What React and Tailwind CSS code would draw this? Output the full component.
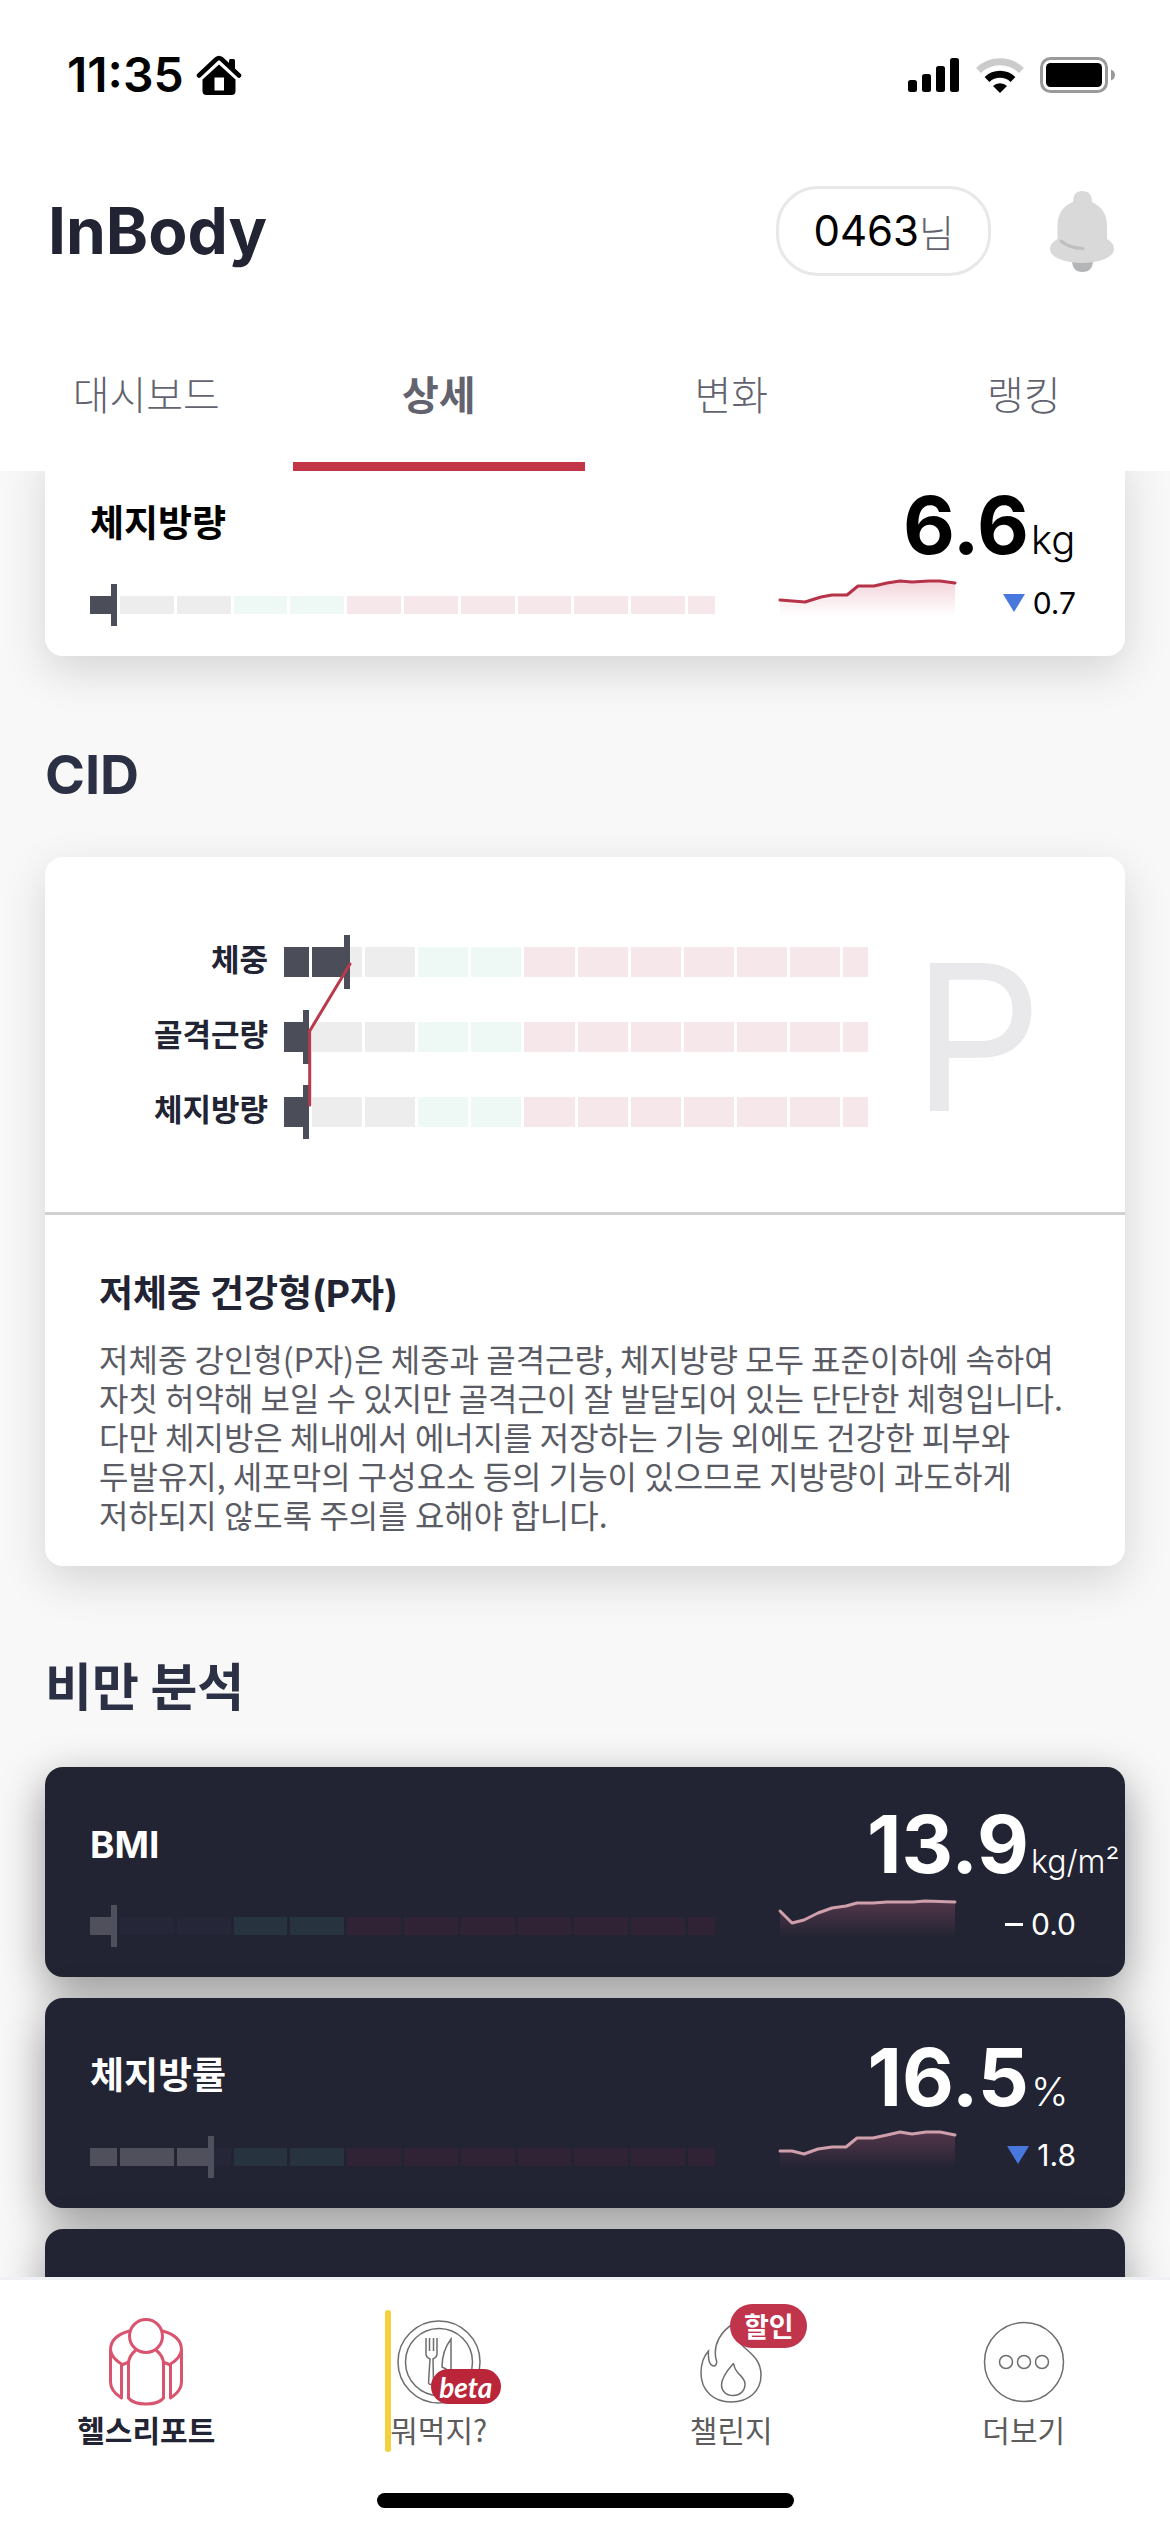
import React, { useId } from 'react';
import { clsx } from 'clsx';

const tabs = [
    { id: 'dashboard', label: '대시보드' },
    { id: 'detail', label: '상세' },
    { id: 'change', label: '변화' },
    { id: 'ranking', label: '랭킹' },
];

const fatMassTrend = [[0, 25], [25, 27], [41, 22], [52, 20], [67, 20], [78, 11], [94, 11], [107, 8], [120, 6], [132, 7], [149, 6], [160, 6], [175, 8]];
const bmiTrend = [[0, 15], [12, 27], [24, 24], [38, 17], [52, 12], [66, 10], [77, 7], [93, 7], [107, 6], [133, 6], [145, 5], [175, 6]];
const fatRateTrend = [[0, 24], [12, 24], [24, 27], [38, 22], [52, 20], [66, 20], [77, 11], [93, 11], [107, 8], [120, 5], [132, 7], [146, 5], [160, 5], [175, 8]];

const cidRows = [
    { label: '체중', value: 2.52 },
    { label: '골격근량', value: 1 },
    { label: '체지방량', value: 1 },
];

// size is counted in half steps: the first and last segment are half as wide
const segments = [
    { tone: 'under', size: 1 },
    { tone: 'under', size: 2 },
    { tone: 'under', size: 2 },
    { tone: 'normal', size: 2 },
    { tone: 'normal', size: 2 },
    { tone: 'over', size: 2 },
    { tone: 'over', size: 2 },
    { tone: 'over', size: 2 },
    { tone: 'over', size: 2 },
    { tone: 'over', size: 2 },
    { tone: 'over', size: 2 },
    { tone: 'over', size: 1 },
];

const lightTones = { under: 'bg-[#ededed]', normal: 'bg-[#eef8f5]', over: 'bg-[#f6e7ea]', fill: 'bg-[#4b4d58]' };
const darkTones = { under: 'bg-[#252739]', normal: 'bg-[#27343f]', over: 'bg-[#302336]', fill: 'bg-[#4f505b]' };

const RangeBar = ({ value, dark = false, thick = false }) => {
    const tones = dark ? darkTones : lightTones;
    let start = 0;
    return (
        <div className={clsx('flex w-full gap-[3px]', thick ? 'h-[30px]' : 'h-[18px]')}>
            {segments.map((segment, index) => {
                const filled = Math.min(Math.max((value - start) / segment.size, 0), 1);
                start += segment.size;
                const isLast = filled > 0 && value <= start;
                return (
                    <div key={index} className={clsx('basis-0', segment.size === 1 ? 'grow' : 'grow-2', tones[segment.tone])}>
                        {filled > 0 && (
                            <div className={clsx('relative h-full', tones.fill)} style={{ width: `${filled * 100}%` }}>
                                {isLast && <span className={clsx('absolute -top-3 -bottom-3 right-0 w-[6px]', tones.fill)} />}
                            </div>
                        )}
                    </div>
                );
            })}
        </div>
    );
};

const Sparkline = ({ points, dark = false }) => {
    const gradientId = useId();
    const line = points.map((point) => point.join(',')).join(' ');
    const color = dark ? '#cf9fac' : '#b53248';
    return (
        <svg viewBox="0 0 176 60" className="h-[60px] w-[176px] shrink-0 overflow-visible" aria-hidden="true">
            <defs>
                <linearGradient id={gradientId} x1="0" y1="5" x2="0" y2="41" gradientUnits="userSpaceOnUse">
                    <stop offset="0" stopColor={dark ? '#54364a' : '#f3d3da'} />
                    <stop offset="1" stopColor={dark ? '#222433' : '#ffffff'} />
                </linearGradient>
            </defs>
            <polygon points={`0,41 ${line} 175,41`} fill={`url(#${gradientId})`} />
            <polyline points={line} fill="none" stroke={color} strokeWidth="3" strokeLinecap="round" strokeLinejoin="round" />
        </svg>
    );
};

const MetricCard = ({ title, value, unit, smallUnit = false, points, level, change, isDown = false, dark = false }) => (
    <article
        className={clsx(
            'h-[210px] rounded-[18px] pt-[39px] pr-[49px] pl-[45px]',
            dark ? 'bg-[#222433] text-white shadow-[0_15px_45px_rgba(0,0,0,0.4)]' : 'bg-white text-black shadow-[0_15px_45px_rgba(0,0,0,0.14)]',
        )}
    >
        <div className="flex h-20 items-center justify-between">
            <h3 className="pb-[2px] font-['Inter','Noto_Sans_CJK_KR',sans-serif] text-[37px] leading-[48px] font-bold">{title}</h3>
            <p className="flex items-baseline pt-[14px] font-[Inter] leading-[80px]">
                <span className="text-[80px] font-bold">{value}</span>
                <span className={clsx('w-[47px] pl-[2px] font-light whitespace-nowrap', smallUnit ? 'text-[32px]' : 'text-[40px]')}>{unit}</span>
            </p>
        </div>
        <div className="mt-[10px] flex h-[60px] items-center">
            <div className="flex-1">
                <RangeBar value={level} dark={dark} />
            </div>
            <div className="ml-[65px]">
                <Sparkline points={points} dark={dark} />
            </div>
            <p className="flex w-[120px] items-center justify-end gap-2 pb-1 font-[Inter] text-[30px] leading-9">
                {isDown ? (
                    <svg viewBox="0 0 22 18" className="h-[18px] w-[22px]" aria-label="감소">
                        <path d="M0 0H22L11 18Z" fill="#4877de" />
                    </svg>
                ) : (
                    <span className="h-[3px] w-[18px] bg-white" />
                )}
                {change}
            </p>
        </div>
    </article>
);

const StatusBar = () => (
    <div className="flex h-[150px] items-center justify-between pr-[54px] pl-[67px] text-black">
        <div className="flex items-center gap-3">
            <span className="font-[Inter] text-[48px] leading-[54px] font-semibold">11:35</span>
            <svg viewBox="0 0 46 40" className="h-10 w-[46px]" aria-hidden="true">
                <path d="M3 20.500 L20.500 4 Q23 2 25.500 4 L43 20.500" fill="none" stroke="#000" strokeWidth="4.500" strokeLinecap="round" />
                <path d="M33 5.500 Q33 4 34.500 4 H37.500 Q39 4 39 5.500 V15 L33 10Z" />
                <path fillRule="evenodd" d="M23 9.500 L39.500 24.500 V36 Q39.500 40 35.500 40 H10.500 Q6.500 40 6.500 36 V24.500Z M18.500 22.500 V35.500 H28 V22.500Z" />
            </svg>
        </div>
        <div className="flex items-center gap-4">
            <svg viewBox="0 0 52 36" className="h-9 w-[52px]" aria-hidden="true">
                <rect x="0" y="23" width="9" height="12" rx="2.500" />
                <rect x="14" y="17" width="9" height="18" rx="2.500" />
                <rect x="28" y="9" width="9" height="26" rx="2.500" />
                <rect x="42" y="1" width="9" height="34" rx="2.500" />
            </svg>
            <svg viewBox="0 0 48 36" className="h-9 w-12" aria-hidden="true">
                <path d="M2.500 13.500 A31 31 0 0 1 45.500 13.500" fill="none" stroke="#cbcbcb" strokeWidth="7" />
                <path d="M11 22.500 A19 19 0 0 1 37 22.500" fill="none" stroke="#000" strokeWidth="7" />
                <path d="M24 36 L17 29 A10 10 0 0 1 31 29Z" />
            </svg>
            <svg viewBox="0 0 76 36" className="h-9 w-[76px]" aria-hidden="true">
                <rect x="1.500" y="1.500" width="65" height="33" rx="9" fill="none" stroke="#9a9a9a" strokeWidth="3" />
                <rect x="6" y="6" width="56" height="24" rx="4.500" />
                <path d="M71 12.500 Q75 14 75 18 Q75 22 71 23.500Z" fill="#9a9a9a" />
            </svg>
        </div>
    </div>
);

const BellIcon = () => (
    <svg viewBox="0 0 64 82" className="h-[82px] w-16" aria-hidden="true">
        <path d="M22 70 H43 Q43 82 32.500 82 Q22 82 22 70Z" fill="#b3b5b6" />
        <path d="M23 12 Q23 1 32 1 Q42 1 42 12 Q57 19 57 36 V49 Q64 53 64 59 C64 67 50 73 32 73 C14 73 0 67 0 59 Q0 53 7.500 49 V36 Q7.500 18 23 12Z" fill="#d9d9d9" />
        <path d="M11 51 Q19 58 33 58.500" fill="none" stroke="#bfbfbf" strokeWidth="3" strokeLinecap="round" />
    </svg>
);

const ReportIcon = () => (
    <svg viewBox="0 0 74 88" className="h-[88px] w-[74px]" fill="none" stroke="#d9546f" strokeWidth="3" strokeLinejoin="round" aria-hidden="true">
        <circle cx="37" cy="18" r="16.500" />
        <path d="M27 32 Q19.500 38 19.500 46 V80 Q24 86 37 86 Q50 86 54.500 80 V46 Q54.500 38 47 32" />
        <path d="M20.500 13 Q1.500 18 1.500 32 V64 Q1.500 73 12.500 80 V46 Q2.500 40 1.500 32" />
        <path d="M53.500 13 Q72.500 18 72.500 32 V64 Q72.500 73 61.500 80 V46 Q71.500 40 72.500 32" />
        <path d="M12.500 47 L20 44 M61.500 47 L54 44" />
    </svg>
);

const FoodIcon = () => (
    <svg viewBox="0 0 84 84" className="h-[84px] w-[84px]" fill="none" stroke="#6e6e6e" strokeWidth="1.500" aria-hidden="true">
        <circle cx="42" cy="42" r="41" />
        <circle cx="42" cy="42" r="33.500" />
        <path d="M29 18 V34 Q29 37 33 39 L31.500 63 Q33 66 36.500 63 L36 39 Q40 37 40 34 V18 M32.500 18 V31 M36.500 18 V31" />
        <path d="M54 54 V19 Q45 31 45 47 L49 49 V54" />
    </svg>
);

const FlameIcon = () => (
    <svg viewBox="0 0 62 82" className="h-[82px] w-[62px]" fill="none" stroke="#6e6e6e" strokeWidth="1.500" aria-hidden="true">
        <path d="M36 1 C20 10 13 24 16 38 Q18 43 14.500 45 C9 45 8 38 8.500 30 C3 36 1 44 1 52 C1 70 14 81 31 81 C49 81 61 70 61 54 C61 34 43 29 37 18 Q34 10 36 1Z" />
        <path d="M33 43 C25 52 21.500 58 21.500 64 C21.500 70 26 74.500 33 74.500 C40 74.500 45 70 45 63 C45 55 35 53 34 44 Q33.500 42 33 43Z" />
    </svg>
);

const MoreIcon = () => (
    <svg viewBox="0 0 82 82" className="h-[82px] w-[82px]" fill="none" stroke="#6e6e6e" strokeWidth="1.500" aria-hidden="true">
        <circle cx="41" cy="41" r="39.500" />
        <circle cx="23" cy="41" r="6.500" />
        <circle cx="41" cy="41" r="6.500" />
        <circle cx="59" cy="41" r="6.500" />
    </svg>
);

const NavItem = ({ label, icon, badge, active = false }) => (
    <a href="#" className="flex flex-col items-center pt-9" aria-current={active ? 'page' : undefined}>
        <span className="relative flex h-[92px] items-center">
            {icon}
            {badge}
        </span>
        <span className={clsx('text-[30px] leading-[42px]', active ? 'font-bold text-[#222433]' : 'text-[#5c5c5c]')}>{label}</span>
    </a>
);

const App = () => {
    return (
        <div className="flex h-screen flex-col overflow-hidden bg-[#f8f8f8] font-['Noto_Sans_CJK_KR',sans-serif]">
            <header className="relative z-10 shrink-0 bg-white">
                <StatusBar />
                <div className="flex h-[162px] items-center justify-between pr-[56px] pl-[48px]">
                    <h1 className="font-[Inter] text-[64px] leading-[72px] font-bold text-[#222433]">InBody</h1>
                    <div className="flex items-center gap-[59px]">
                        <button type="button" className="flex h-[90px] items-center rounded-[42px] border-[3px] border-[#e8e8e8] px-[34px] pb-[2px] text-[38px] font-light text-[#62636e]">
                            <span className="font-[Inter] text-[42px] font-normal text-black">0463</span>님
                        </button>
                        <button type="button" aria-label="알림">
                            <BellIcon />
                        </button>
                    </div>
                </div>
                <nav className="grid grid-cols-4">
                    {tabs.map((tab) => (
                        <button
                            key={tab.id}
                            type="button"
                            className={clsx(
                                'h-[159px] border-b-[9px] pt-3 text-[40px] text-[#62636e]',
                                tab.id === 'detail' ? 'border-[#c33648] font-bold' : 'border-transparent font-light',
                            )}
                        >
                            {tab.label}
                        </button>
                    ))}
                </nav>
            </header>

            <main className="min-h-0 flex-1 overflow-y-auto px-[45px] [scrollbar-width:none]">
                {/* the list is scrolled a little, so the first card starts under the header */}
                <div className="-mt-[25px]">
                    <MetricCard title="체지방량" value="6.6" unit="kg" level={1} points={fatMassTrend} change="0.7" isDown />
                </div>

                <h2 className="flex h-[201px] items-center pt-9 font-[Inter] text-[54px] font-bold text-[#2c3045]">CID</h2>
                <section className="rounded-[18px] bg-white shadow-[0_15px_45px_rgba(0,0,0,0.14)]">
                    <div className="flex h-[358px] border-b-[3px] border-[#d0d0d0] pt-[67px]">
                        <div className="w-[223px] text-right text-[31px] font-bold text-[#222433]">
                            {cidRows.map((row) => (
                                <p key={row.label} className="flex h-[75px] items-center justify-end pb-[6px]">{row.label}</p>
                            ))}
                        </div>
                        <div className="relative ml-4 h-[225px] flex-1">
                            {cidRows.map((row) => (
                                <div key={row.label} className="flex h-[75px] items-center">
                                    <RangeBar value={row.value} thick />
                                </div>
                            ))}
                            <svg className="absolute inset-0 h-full w-full" stroke="#b83a4c" strokeWidth="3" strokeLinecap="round" aria-hidden="true">
                                <line x1="11.3%" y1="40" x2="4.4%" y2="107" />
                                <line x1="4.4%" y1="107" x2="4.4%" y2="181" />
                            </svg>
                        </div>
                        <p className="flex h-[225px] w-[257px] items-center pl-[44px] font-[Inter] text-[204px] leading-none text-[#e9e9eb]">P</p>
                    </div>
                    <div className="px-[54px] pt-[52px] pb-8">
                        <h3 className="font-['Inter','Noto_Sans_CJK_KR',sans-serif] text-[37px] leading-[54px] font-bold text-[#222433]">저체중 건강형(P자)</h3>
                        <p className="mt-[18px] text-[32px] leading-[39px] text-[#5a5b65]">
                            저체중 강인형(P자)은 체중과 골격근량, 체지방량 모두 표준이하에 속하여<br />
                            자칫 허약해 보일 수 있지만 골격근이 잘 발달되어 있는 단단한 체형입니다.<br />
                            다만 체지방은 체내에서 에너지를 저장하는 기능 외에도 건강한 피부와<br />
                            두발유지, 세포막의 구성요소 등의 기능이 있으므로 지방량이 과도하게<br />
                            저하되지 않도록 주의를 요해야 합니다.
                        </p>
                    </div>
                </section>

                <h2 className="flex h-[201px] items-center pt-9 text-[51px] font-bold text-[#2c3045]">비만 분석</h2>
                <div className="flex flex-col gap-[21px]">
                    <MetricCard title="BMI" value="13.9" unit="kg/m²" smallUnit level={1} points={bmiTrend} change="0.0" dark />
                    <MetricCard title="체지방률" value="16.5" unit="%" level={4.4} points={fatRateTrend} change="1.8" isDown dark />
                    <article className="h-[210px] rounded-[18px] bg-[#222433] shadow-[0_15px_45px_rgba(0,0,0,0.4)]" />
                </div>
            </main>

            <footer className="relative z-10 h-[255px] shrink-0 border-t-[3px] border-[#f0f1f4] bg-white">
                <nav className="grid grid-cols-4">
                    <NavItem label="헬스리포트" icon={<ReportIcon />} active />
                    <div className="relative">
                        <span className="absolute top-[30px] left-[92px] h-[142px] w-[6px] rounded-full bg-[#f3d03e]" />
                        <NavItem
                            label="뭐먹지?"
                            icon={<FoodIcon />}
                            badge={<span className="absolute bottom-1 left-[34px] flex h-[35px] w-[70px] items-center justify-center rounded-full bg-[#bb2539] font-[Lato] text-[28px] font-bold text-white italic">beta</span>}
                        />
                    </div>
                    <NavItem
                        label="챌린지"
                        icon={<FlameIcon />}
                        badge={<span className="absolute -top-3 left-[30px] flex h-11 w-[77px] items-center justify-center rounded-full bg-[#c0354b] text-[27px] font-bold text-white">할인</span>}
                    />
                    <NavItem label="더보기" icon={<MoreIcon />} />
                </nav>
                <div className="mx-auto mt-[43px] h-[15px] w-[417px] rounded-full bg-black" />
            </footer>
        </div>
    );
};

export default App;
